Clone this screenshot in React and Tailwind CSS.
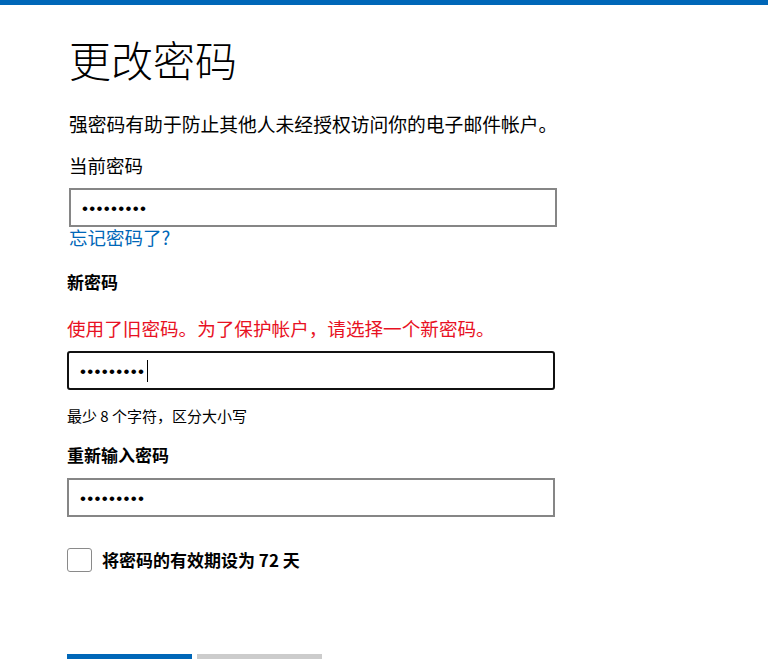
import { useState } from 'react';

const font = { fontFamily: '"Noto Sans CJK SC", "Noto Sans", sans-serif' };

function PasswordBox({ value, focused, className = '' }) {
    return (
        <div className={`relative h-[39px] w-[488px] ${className}`}>
            <input
                type="password"
                readOnly
                value={value}
                className={`h-full w-full px-[11px] pt-[3px] text-[17px] tracking-[1.3px] text-black outline-none ${
                    focused ? 'rounded-[3px] border-2 border-[#111111]' : 'border-2 border-[#868686]'
                }`}
                style={{ fontFamily: '"Liberation Sans", Arial, sans-serif' }}
            />
            {focused && <span className="absolute left-[80px] top-[9px] h-[22px] w-px bg-black" />}
        </div>
    );
}

export default function App() {
    const [expire, setExpire] = useState(false);

    return (
        <div className="min-h-[659px] overflow-hidden bg-white text-black" style={font}>
            <div className="h-[5px] bg-[#0067b8]" />

            <div className="ml-[67px] w-[490px]">
                {/* bagian atas sedikit bergeser 2px */}
                <div className="pl-[2px]">
                    <h1 className="mt-[30px] text-[42px] font-light leading-[48px]">更改密码</h1>
                    <p className="mt-[29px] whitespace-nowrap text-[18.8px] leading-[24px]">
                        强密码有助于防止其他人未经授权访问你的电子邮件帐户。
                    </p>
                    <div className="mt-[17px] text-[18.5px] leading-[24px]">当前密码</div>
                    <PasswordBox value="123456789" className="mt-[11px]" />
                    <a href="#" className="block text-[18.5px] leading-[20px] text-[#0067b8]">
                        忘记密码了?
                    </a>
                </div>

                <div className="mt-[24px] text-[17px] font-bold leading-[22px]">新密码</div>
                <div className="mt-[23px] whitespace-nowrap text-[18.6px] leading-[24px] text-[#e81123]">
                    使用了旧密码。为了保护帐户，请选择一个新密码。
                </div>
                <PasswordBox value="123456789" focused className="mt-[11px] w-[487px]" />
                <div className="mt-[16px] text-[15px] leading-[20px]">最少 8 个字符，区分大小写</div>

                <div className="mt-[18px] text-[17px] font-bold leading-[22px]">重新输入密码</div>
                <PasswordBox value="123456789" className="mt-[12px] w-[487px]" />

                <label className="mt-[31px] flex cursor-pointer items-center gap-[10px]">
                    <input
                        type="checkbox"
                        checked={expire}
                        onChange={(e) => setExpire(e.target.checked)}
                        className="h-[24px] w-[25px] appearance-none rounded-[3px] border-[1.5px] border-[#8a8a8a] bg-white checked:bg-[#0067b8]"
                    />
                    <span className="text-[17px] font-bold leading-[22px]">将密码的有效期设为 72 天</span>
                </label>

                {/* tombol terpotong di bawah layar, hanya tepi atasnya yang terlihat */}
                <div className="mt-[82px] flex gap-[5px]">
                    <button aria-label="下一步" className="h-[5px] w-[125px] bg-[#0067b8]" />
                    <button aria-label="取消" className="h-[5px] w-[125px] bg-[#cccccc]" />
                </div>
            </div>
        </div>
    );
}
